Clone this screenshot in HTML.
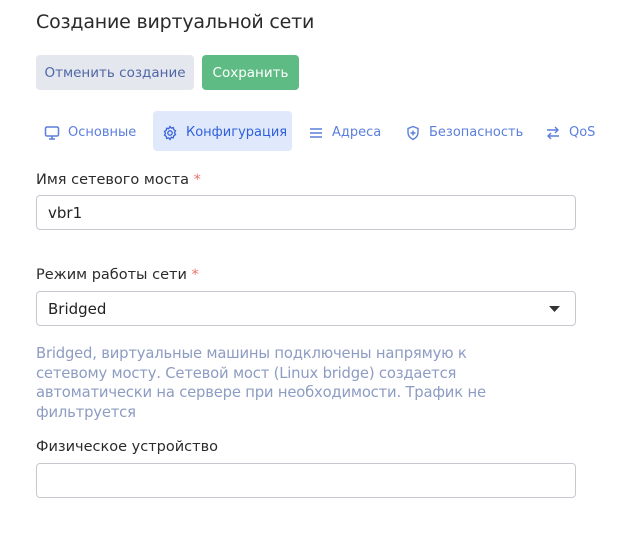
<!DOCTYPE html>
<html><head><meta charset="utf-8"><style>
*{box-sizing:border-box;margin:0;padding:0}
body{width:618px;height:538px;background:#fff;font-family:"DejaVu Sans","Liberation Sans",sans-serif;color:#2b2b2b;position:relative;overflow:hidden}
.a{position:absolute;white-space:nowrap}
h1{position:absolute;left:36px;top:11px;font-size:19px;font-weight:normal;color:#2a2a2a;letter-spacing:-0.2px}
.btn{position:absolute;top:55px;height:35px;border-radius:4px;font-size:13.5px;line-height:36px;text-align:center}
.tab{position:absolute;top:113px;height:40px;line-height:40px;font-size:13px;color:#5b7fdc;display:flex;align-items:center;gap:8px}
.tab svg{width:16px;height:16px}
.lbl{position:absolute;left:36px;font-size:14.5px;color:#2b2b2b}
.lbl b{color:#f07070;font-weight:normal}
.inp{position:absolute;left:36px;width:540px;height:35px;border:1px solid #c6c9cf;border-radius:4px;font-size:15px;line-height:34px;padding-left:11px;color:#222}
.help{position:absolute;left:36px;top:344px;font-size:14.8px;line-height:19.5px;color:#8d9cc2;white-space:nowrap;letter-spacing:-0.2px}
</style></head><body>
<h1>Создание виртуальной сети</h1>
<div class="btn" style="left:36px;width:158px;background:#e4e7ee;color:#4f67a6">Отменить создание</div>
<div class="btn" style="left:202px;width:97px;background:#5fbb84;color:#fff">Сохранить</div>

<div class="tab" style="left:44px"><svg viewBox="0 0 16 16" fill="none" stroke="#5b7fdc" stroke-width="1.5"><rect x="1.5" y="2" width="13" height="9" rx="1.5"/><path d="M5 14h6M8 11v3"/></svg>Основные</div>
<div class="a" style="left:153px;top:111px;width:139px;height:40px;background:#dfe9fb;border-radius:4px"></div>
<div class="tab" style="left:162px;color:#2f5fdc"><svg viewBox="0 0 16 16" fill="none" stroke="#3a64d8" stroke-width="1.3"><circle cx="8" cy="8" r="2.2"/><path d="M8 1.5l1.3 1.6 2-.5.5 2 1.7 1.2-1 1.9 1 1.9-1.7 1.2-.5 2-2-.5L8 14.5l-1.3-1.6-2 .5-.5-2-1.7-1.2 1-1.9-1-1.9 1.7-1.2.5-2 2 .5z"/></svg>Конфигурация</div>
<div class="tab" style="left:308px"><svg viewBox="0 0 16 16" fill="none" stroke="#5b7fdc" stroke-width="1.6"><path d="M2 4h12M2 8h12M2 12h12"/></svg>Адреса</div>
<div class="tab" style="left:405px"><svg viewBox="0 0 16 16" fill="none" stroke="#5b7fdc" stroke-width="1.4"><path d="M8 1.5l5 2v4c0 3.3-2.3 5.6-5 7-2.7-1.4-5-3.7-5-7v-4z"/><path d="M8 5.5v5M5.5 8h5"/></svg>Безопасность</div>
<div class="tab" style="left:545px"><svg viewBox="0 0 16 16" fill="none" stroke="#5b7fdc" stroke-width="1.4"><path d="M2 5h11M10 2l3 3-3 3M14 11H3M6 8l-3 3 3 3"/></svg>QoS</div>

<div class="lbl" style="top:172px">Имя сетевого моста <b>*</b></div>
<div class="inp" style="top:195px">vbr1</div>
<div class="lbl" style="top:267px">Режим работы сети <b>*</b></div>
<div class="inp" style="top:291px">Bridged<svg style="position:absolute;right:15px;top:14px" width="11" height="6" viewBox="0 0 11 6"><path d="M0 0h11L5.5 6z" fill="#333"/></svg></div>
<div class="help">Bridged, виртуальные машины подключены напрямую к<br>сетевому мосту. Сетевой мост (Linux bridge) создается<br>автоматически на сервере при необходимости. Трафик не<br>фильтруется</div>
<div class="lbl" style="top:439px">Физическое устройство</div>
<div class="inp" style="top:463px"></div>
</body></html>
